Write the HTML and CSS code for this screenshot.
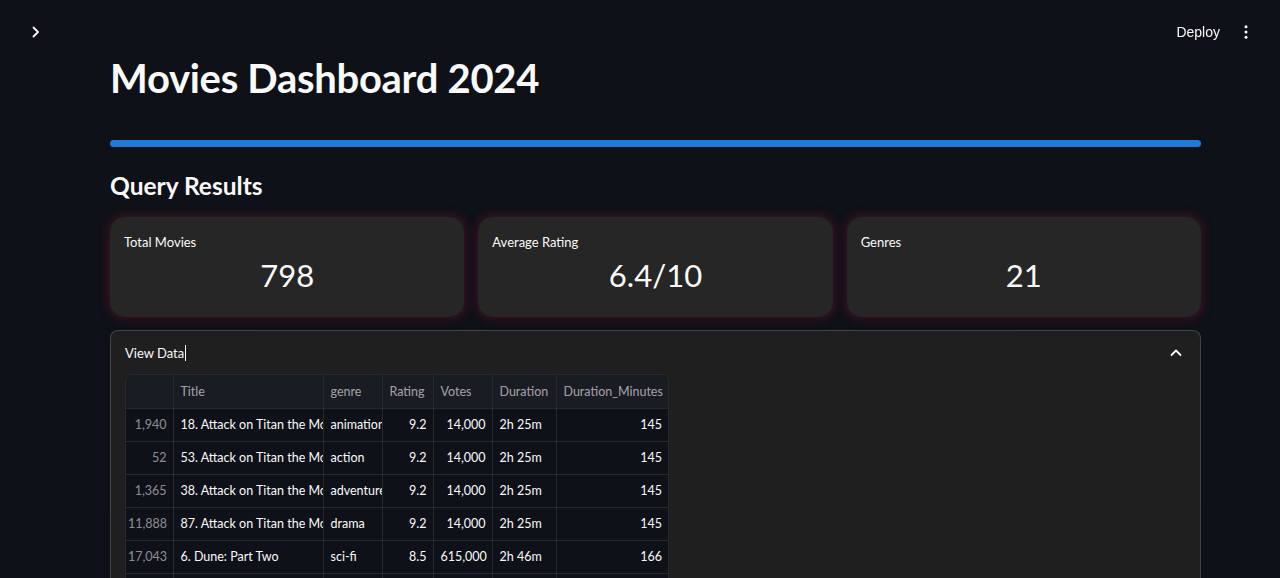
FILE: index.html
```html
<!DOCTYPE html>
<html lang="en">
<head>
<meta charset="utf-8">
<title>Movies Dashboard 2024</title>
<link rel="stylesheet" href="styles.css">
</head>
<body>
<header class="toolbar">
  <button class="icon-btn sidebar-toggle" aria-label="Open sidebar">
    <svg width="16" height="16" viewBox="0 0 16 16"><path d="M5.5 3.5 L10 8 L5.5 12.5" fill="none" stroke="#fafafa" stroke-width="1.8" stroke-linecap="round" stroke-linejoin="round"/></svg>
  </button>
  <div class="toolbar-right">
    <span class="deploy">Deploy</span>
    <button class="icon-btn menu" aria-label="Main menu">
      <svg width="16" height="16" viewBox="0 0 16 16"><circle cx="8" cy="2.8" r="1.5" fill="#fafafa"/><circle cx="8" cy="8" r="1.5" fill="#fafafa"/><circle cx="8" cy="13.2" r="1.5" fill="#fafafa"/></svg>
    </button>
  </div>
</header>

<main class="main">
  <h1 class="title">Movies Dashboard 2024</h1>
  <div class="bar"></div>
  <h3 class="subtitle">Query Results</h3>

  <section class="metrics">
    <div class="metric">
      <div class="metric-label">Total Movies</div>
      <div class="metric-value">798</div>
    </div>
    <div class="metric">
      <div class="metric-label">Average Rating</div>
      <div class="metric-value">6.4/10</div>
    </div>
    <div class="metric">
      <div class="metric-label">Genres</div>
      <div class="metric-value">21</div>
    </div>
  </section>

  <section class="expander">
    <div class="expander-head">
      <span class="expander-title">View Data<span class="caret"></span></span>
      <svg width="14" height="14" viewBox="0 0 14 14"><path d="M2.5 9 L7 4.5 L11.5 9" fill="none" stroke="#fafafa" stroke-width="1.8" stroke-linecap="round" stroke-linejoin="round"/></svg>
    </div>
    <div class="expander-body">
      <div class="grid-wrap">
        <table class="grid">
          <colgroup>
            <col class="c-idx"><col class="c-title"><col class="c-genre"><col class="c-rating"><col class="c-votes"><col class="c-dur"><col class="c-min">
          </colgroup>
          <thead>
            <tr><th></th><th>Title</th><th>genre</th><th>Rating</th><th>Votes</th><th>Duration</th><th>Duration_Minutes</th></tr>
          </thead>
          <tbody>
            <tr><td class="idx">1,940</td><td>18. Attack on Titan the Movie: The Last Attack</td><td>animation</td><td class="num">9.2</td><td class="num">14,000</td><td>2h 25m</td><td class="num">145</td></tr>
            <tr><td class="idx">52</td><td>53. Attack on Titan the Movie: The Last Attack</td><td>action</td><td class="num">9.2</td><td class="num">14,000</td><td>2h 25m</td><td class="num">145</td></tr>
            <tr><td class="idx">1,365</td><td>38. Attack on Titan the Movie: The Last Attack</td><td>adventure</td><td class="num">9.2</td><td class="num">14,000</td><td>2h 25m</td><td class="num">145</td></tr>
            <tr><td class="idx">11,888</td><td>87. Attack on Titan the Movie: The Last Attack</td><td>drama</td><td class="num">9.2</td><td class="num">14,000</td><td>2h 25m</td><td class="num">145</td></tr>
            <tr><td class="idx">17,043</td><td>6. Dune: Part Two</td><td>sci-fi</td><td class="num">8.5</td><td class="num">615,000</td><td>2h 46m</td><td class="num">166</td></tr>
            <tr><td class="idx">3,210</td><td>12. Dune: Part Two</td><td>adventure</td><td class="num">8.5</td><td class="num">615,000</td><td>2h 46m</td><td class="num">166</td></tr>
          </tbody>
        </table>
      </div>
    </div>
  </section>
</main>
</body>
</html>
```

FILE: styles.css
```css
* { box-sizing: border-box; }

html, body {
  margin: 0;
  background: #0e1117;
  color: #fafafa;
  font-family: Lato, "Open Sans", sans-serif;
  overflow: hidden;
}

.toolbar {
  position: fixed;
  top: 0;
  left: 0;
  right: 0;
  height: 60px;
  display: flex;
  align-items: center;
  justify-content: space-between;
  padding: 0 26px 0 28px;
  z-index: 5;
}

.icon-btn {
  background: none;
  border: 0;
  padding: 0;
  width: 16px;
  height: 16px;
  display: flex;
  align-items: center;
  justify-content: center;
  cursor: pointer;
}

.sidebar-toggle { margin-top: 4px; }

.toolbar-right {
  display: flex;
  align-items: center;
  gap: 18px;
  margin-top: 4px;
}

.deploy {
  font-family: "Liberation Sans", Arial, sans-serif;
  font-size: 14px;
  color: #fafafa;
  margin-left: 3px;
}

.main {
  width: 1091px;
  margin-left: 110px;
  padding-top: 56px;
}

.title {
  margin: 0;
  font-size: 40px;
  font-weight: 700;
  line-height: 44px;
  letter-spacing: -0.3px;
}

.bar {
  margin-top: 40px;
  height: 7px;
  border-radius: 4px;
  background: #1f7ad8;
}

.subtitle {
  margin: 24px 0 0;
  font-size: 24.5px;
  font-weight: 700;
  line-height: 30px;
}

.metrics {
  margin-top: 16px;
  display: grid;
  grid-template-columns: repeat(3, 1fr);
  gap: 14px;
}

.metric {
  height: 100px;
  background: #262626;
  border-radius: 15px;
  box-shadow: 0 0 9px 3px rgba(70, 18, 36, 0.7);
  padding: 17px 14px 0;
}

.metric-label {
  font-size: 13px;
  line-height: 16px;
}

.metric-value {
  margin-top: 7px;
  text-align: center;
  font-size: 31px;
  line-height: 36px;
  font-weight: 400;
}

.expander {
  margin-top: 13px;
  background: #1f1f1f;
  border: 1px solid rgba(250, 250, 250, 0.16);
  border-bottom: 0;
  border-radius: 8px 8px 0 0;
  height: 260px;
}

.expander-head {
  height: 43px;
  display: flex;
  align-items: center;
  justify-content: space-between;
  padding: 0 17px 0 14px;
}

.expander-title {
  font-size: 13px;
  display: flex;
  align-items: center;
}

.caret {
  display: inline-block;
  width: 1px;
  height: 16px;
  background: #fafafa;
  margin-left: 1px;
}

.expander-body {
  padding: 0 14px;
}

.grid-wrap {
  width: 544px;
  border: 1px solid rgba(250, 250, 250, 0.1);
  border-bottom: 0;
  border-radius: 7px 7px 0 0;
  overflow: hidden;
  background: #0e1117;
}

.grid {
  table-layout: fixed;
  border-collapse: collapse;
  width: 542px;
  font-size: 12.5px;
}

.c-idx { width: 47px; }
.c-title { width: 150px; }
.c-genre { width: 59px; }
.c-rating { width: 51px; }
.c-votes { width: 59px; }
.c-dur { width: 64px; }
.c-min { width: 112px; }

.grid th, .grid td {
  height: 33px;
  padding: 0 6px 0 7px;
  white-space: nowrap;
  overflow: hidden;
  text-overflow: clip;
  border-right: 1px solid rgba(250, 250, 250, 0.1);
  border-bottom: 1px solid rgba(250, 250, 250, 0.1);
  text-align: left;
}

.grid th:last-child, .grid td:last-child { border-right: 0; }

.grid th {
  font-weight: 400;
  color: rgba(250, 250, 250, 0.62);
  background: #1a1c24;
}

.grid td { color: #fafafa; }

.grid td.idx {
  text-align: right;
  color: rgba(250, 250, 250, 0.55);
  padding-left: 2px;
}

.grid td.num { text-align: right; }
```
